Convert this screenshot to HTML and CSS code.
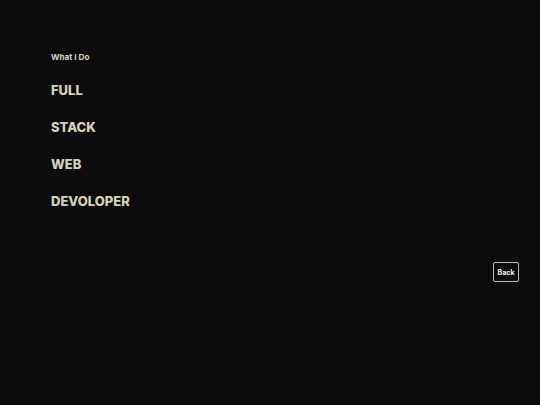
FILE: index.html
```html
<!DOCTYPE html>
<html>
<head>
<meta charset="utf-8">
<link rel="stylesheet" href="styles.css">
</head>
<body>
<main class="page">
  <section class="what">
    <h2 class="label">What I Do</h2>
    <ul class="roles">
      <li>FULL</li>
      <li>STACK</li>
      <li>WEB</li>
      <li>DEVOLOPER</li>
    </ul>
  </section>
  <div class="actions">
    <button class="back">Back</button>
  </div>
</main>
</body>
</html>
```
FILE: styles.css
```css
html, body {
  margin: 0;
  padding: 0;
  background: #0c0c0d;
  height: 100%;
}
body {
  font-family: "Inter", "Noto Sans", sans-serif;
}
.page {
  width: 540px;
  height: 405px;
  box-sizing: border-box;
  padding: 51px 21px 0 51px;
  display: flex;
  flex-direction: column;
}
.label {
  margin: 0;
  font-size: 8.2px;
  font-weight: 700;
  color: #d9d5c2;
  line-height: 12px;
}
.roles {
  list-style: none;
  margin: 18px 0 0 0;
  padding: 0;
  display: flex;
  flex-direction: column;
  gap: 19px;
}
.roles li {
  font-size: 13px;
  font-weight: 800;
  color: #d6d1bd;
  line-height: 18px;
}
.actions {
  display: flex;
  justify-content: flex-end;
  margin-top: 52px;
}
.back {
  font-family: inherit;
  font-size: 7px;
  font-weight: 700;
  color: #f2f2f2;
  background: transparent;
  border: 1px solid #bdbdbd;
  border-radius: 2px;
  width: 26px;
  height: 20px;
  padding: 0;
}
```
